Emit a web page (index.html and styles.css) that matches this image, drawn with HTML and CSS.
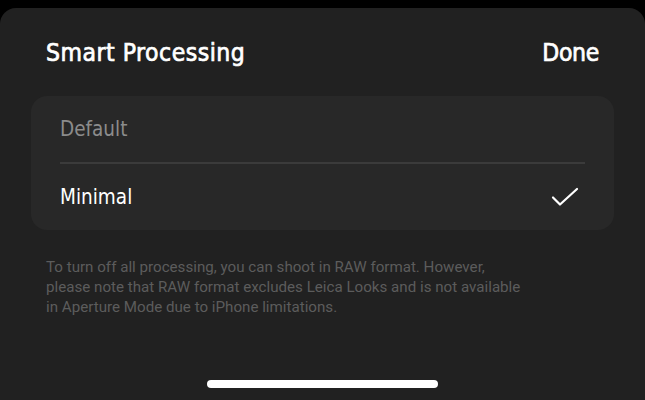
FILE: index.html
```html
<!DOCTYPE html>
<html>
<head>
<meta charset="utf-8">
<link rel="stylesheet" href="styles.css">
</head>
<body>
<div class="sheet">
  <header class="head">
    <span class="title">Smart Processing</span>
    <span class="done">Done</span>
  </header>
  <div class="card">
    <div class="row dim">Default</div>
    <div class="divider"></div>
    <div class="row">
      <span>Minimal</span>
      <svg class="check" width="28" height="20" viewBox="0 0 28 20"><path d="M2 10.5 L9 17.5 L26 2" fill="none" stroke="#fff" stroke-width="2.2" stroke-linecap="round" stroke-linejoin="round"/></svg>
    </div>
  </div>
  <p class="note">To turn off all processing, you can shoot in RAW format. However, please note that RAW format excludes Leica Looks and is not available in Aperture Mode due to iPhone limitations.</p>
  <div class="home"></div>
</div>
</body>
</html>
```
FILE: styles.css
```css
html, body { margin: 0; padding: 0; background: #000; }
body { width: 645px; height: 400px; overflow: hidden; padding-top: 8px; box-sizing: border-box; }
.sheet {
  background: #212121;
  border-radius: 16px 16px 0 0;
  height: 392px;
  padding: 0 31px;
  box-sizing: border-box;
  display: flex;
  flex-direction: column;
}
.head {
  display: flex;
  justify-content: space-between;
  align-items: center;
  padding: 0 15px;
  height: 88px;
  font-family: "DejaVu Sans Condensed", "DejaVu Sans", sans-serif;
  color: #fff;
  font-size: 24.5px;
  -webkit-text-stroke: 0.7px #fff;
}
.title { letter-spacing: 0.5px; }
.done { letter-spacing: -0.3px; }
.card {
  background: #282828;
  border-radius: 16px;
  padding: 0 29px;
  font-family: "DejaVu Sans Condensed", "DejaVu Sans", sans-serif;
  font-size: 20.5px;
  color: #fff;
}
.row {
  height: 66px;
  display: flex;
  align-items: center;
  justify-content: space-between;
}
.row.dim { color: #8c8c8c; }
.divider { height: 2px; background: #3b3b3b; }
.check { margin-right: 6px; }
.note {
  margin: 27px 15px 0;
  width: 479px;
  font-family: Roboto, "Noto Sans", sans-serif;
  font-size: 15.15px;
  line-height: 20px;
  color: #5c5c5c;
}
.home {
  margin: auto auto 0;
  width: 231px;
  height: 8px;
  border-radius: 4px;
  background: #fff;
  margin-bottom: 12px;
}
```
